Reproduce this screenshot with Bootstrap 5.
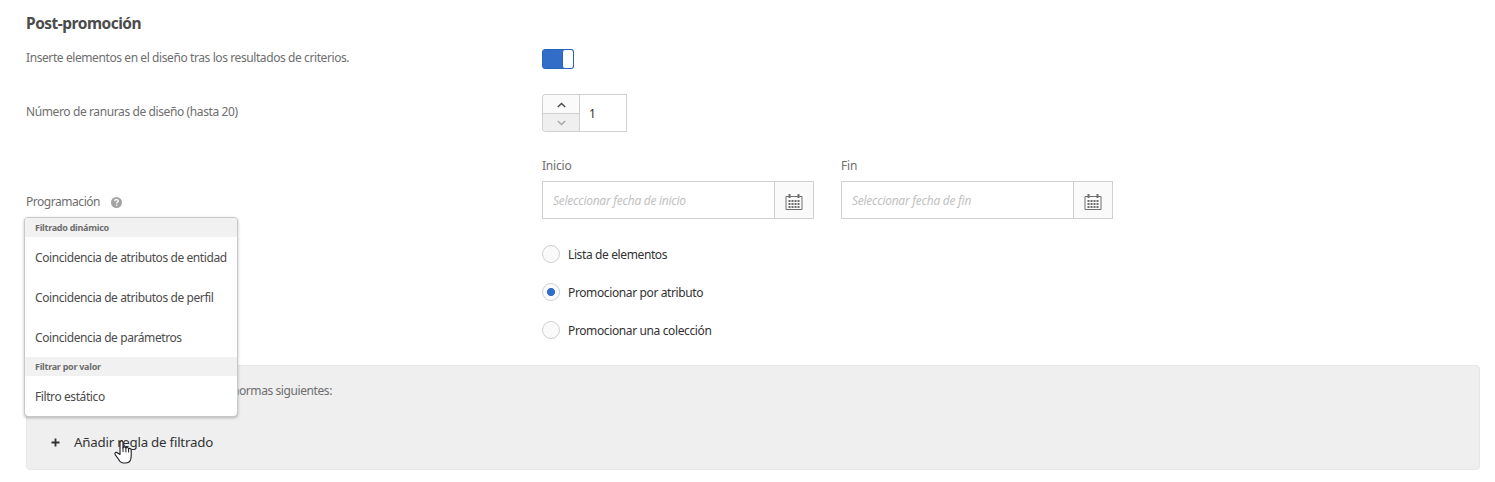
<!DOCTYPE html>
<html lang="es">
<head>
<meta charset="utf-8">
<meta name="viewport" content="width=device-width, initial-scale=1">
<title>Post-promoción</title>
<link href="https://cdn.jsdelivr.net/npm/bootstrap@5.3.0/dist/css/bootstrap.min.css" rel="stylesheet">
<style>
  body { font-family: "Noto Sans", "Open Sans", sans-serif; font-size: 12px; line-height: 18px; letter-spacing: -.41px; color: #6e6e6e; background: #fff; overflow: hidden; }
  .page { padding: 13px 15px 12px 26px; }
  .heading { font-size: 15.5px; line-height: 20px; letter-spacing: -.5px; font-weight: 700; color: #4b4b4b; margin: 0 0 16px; }
  .label-col { width: 516px; flex: none; }
  .toggle-row { height: 45px; }
  .slots-label { letter-spacing: -.39px; margin-top: -2px; }
  .schedule-label { gap: 11px; margin-bottom: 8px; letter-spacing: -.46px; }
  .toggle { width: 32px; height: 20px; border: 1px solid #2464bf; border-radius: 3px; background: #326ec8; }
  .toggle span { width: 12px; height: 20px; margin: -1px; border: 1px solid #2464bf; border-radius: 3px; background: #fff; }
  .stepper { height: 38px; width: 85px; }
  .stepper-buttons { width: 37px; flex: none; border: 1px solid #d0d0d0; border-right: 0; border-radius: 4px 0 0 4px; overflow: hidden; }
  .stepper-buttons button { border: 0; padding: 2px 0 0; height: 18px; background: #fafafa; color: #4b4b4b; }
  .stepper-buttons button + button { padding: 0; border-top: 1px solid #d0d0d0; background: #efefef; color: #a8a8a8; }
  .field { border: 1px solid #d0d0d0; border-radius: 0; padding: 2px 10px 0; font-size: 12px; color: #323232; letter-spacing: inherit; }
  .stepper .field { width: 48px; padding-left: 9px; }
  .date-group { width: 272px; height: 38px; }
  .date-group .field { border-right: 0; min-width: 0; }
  .date-label { margin-bottom: 6px; letter-spacing: -.2px; }
  .date-group .field::placeholder { color: #c2c2c2; font-style: italic; letter-spacing: -.27px; opacity: 1; }
  .date-group .btn { width: 40px; border: 1px solid #d0d0d0; border-radius: 0; background: #fafafa; color: #6e6e6e; padding: 3px 0 0; }
  .choices { margin-top: 26px; }
  .choice { height: 18px; gap: 8px; color: #323232; letter-spacing: -.38px; }
  .choice span { padding-top: 2px; }
  .choice .form-check-input { width: 18px; height: 18px; border: 1px solid #d0d0d0; background: #fafafa; box-shadow: none; }
  .choice .form-check-input:checked { background: radial-gradient(circle, #326ec8 3.7px, #fafafa 4.4px); }
  .rules { height: 105px; border: 1px solid #e6e6e6; border-radius: 4px; background: #efefef; margin-top: 26px; }
  .rules p { width: 305px; padding-top: 16px; }
  .add-rule { font-size: 13.3px; letter-spacing: -.22px; color: #323232; margin: 33px 0 0 24px; gap: 14px; }
  .add-rule svg { margin-top: 1px; }
  .filter-menu { left: 24px; top: 217px; width: 214px; height: 200px; padding: 0; border: 1px solid #c8c8c8; border-radius: 4px; box-shadow: 0 1px 3px rgba(0,0,0,.25); overflow: hidden; font-size: 12px; }
  .filter-menu .dropdown-header { height: 19px; padding: 0 10px; font-size: 9px; line-height: 19px; letter-spacing: -.27px; font-weight: 700; color: #6e6e6e; background: #f1f1f1; }
  .filter-menu .dropdown-item { height: 40px; padding: 1px 10px 0; line-height: 40px; color: #4b4b4b; }
  .pointer { left: 114px; top: 440px; z-index: 1001; }
</style>
</head>
<body>
<main class="page position-relative">
  <h1 class="heading">Post-promoción</h1>

  <div class="toggle-row d-flex">
    <div class="label-col">Inserte elementos en el diseño tras los resultados de criterios.</div>
    <div class="toggle d-flex justify-content-end" role="switch" aria-checked="true"><span></span></div>
  </div>

  <div class="d-flex align-items-center mb-4">
    <div class="label-col slots-label">Número de ranuras de diseño (hasta 20)</div>
    <div class="stepper d-flex">
      <div class="stepper-buttons d-flex flex-column">
        <button class="d-flex align-items-center justify-content-center" aria-label="Aumentar"><svg width="9" height="6" viewBox="0 0 9 6" fill="none" stroke="currentColor" stroke-width="1.5"><path d="M.8 5 4.5 1.5 8.2 5"/></svg></button>
        <button class="d-flex align-items-center justify-content-center flex-fill" aria-label="Reducir"><svg width="9" height="6" viewBox="0 0 9 6" fill="none" stroke="currentColor" stroke-width="1.5"><path d="M.8 1 4.5 4.5 8.2 1"/></svg></button>
      </div>
      <input class="field" value="1" aria-label="Número de ranuras">
    </div>
  </div>

  <div class="d-flex align-items-end">
    <div class="label-col schedule-label d-flex align-items-center"><span>Programación</span>
      <svg width="11" height="11" viewBox="0 0 10 10"><circle cx="5" cy="5" r="5" fill="#a3a3a3"/><path d="M3.400 3.800C3.400 1.800 6.600 1.800 6.600 3.700 6.600 4.800 5.100 4.800 5.100 6" fill="none" stroke="#fff" stroke-width="1.2"/><circle cx="5.100" cy="7.500" r=".75" fill="#fff"/></svg>
    </div>
    <div class="d-flex" style="gap:27px">
      <div>
        <label class="date-label d-block pt-0" for="start"><span class="d-block" style="padding-top:1px">Inicio</span></label>
        <div class="date-group d-flex">
          <input id="start" class="field flex-fill" placeholder="Seleccionar fecha de inicio">
          <button class="btn d-flex align-items-center justify-content-center" aria-label="Calendario"><svg width="18" height="16" viewBox="0 0 18 16"><path d="M1 2.500h16v13H1z" fill="none" stroke="currentColor"/><path d="M4.500 0v4M13.500 0v4" stroke="currentColor" stroke-width="2"/><path d="M3.500 7h11M3.500 10h11M3.500 13h11" stroke="currentColor" stroke-width="2" stroke-dasharray="2 1"/></svg></button>
        </div>
      </div>
      <div>
        <label class="date-label d-block pt-0" for="end"><span class="d-block" style="padding-top:1px">Fin</span></label>
        <div class="date-group d-flex">
          <input id="end" class="field flex-fill" placeholder="Seleccionar fecha de fin">
          <button class="btn d-flex align-items-center justify-content-center" aria-label="Calendario"><svg width="18" height="16" viewBox="0 0 18 16"><path d="M1 2.500h16v13H1z" fill="none" stroke="currentColor"/><path d="M4.500 0v4M13.500 0v4" stroke="currentColor" stroke-width="2"/><path d="M3.500 7h11M3.500 10h11M3.500 13h11" stroke="currentColor" stroke-width="2" stroke-dasharray="2 1"/></svg></button>
        </div>
      </div>
    </div>
  </div>

  <div class="choices d-flex">
    <div class="label-col"></div>
    <div class="d-flex flex-column" style="gap:20px">
      <label class="choice d-flex align-items-center"><input class="form-check-input m-0" type="radio" name="promo"><span>Lista de elementos</span></label>
      <label class="choice d-flex align-items-center"><input class="form-check-input m-0" type="radio" name="promo" checked><span>Promocionar por atributo</span></label>
      <label class="choice d-flex align-items-center"><input class="form-check-input m-0" type="radio" name="promo"><span>Promocionar una colección</span></label>
    </div>
  </div>

  <section class="rules">
    <p class="text-end mb-0">normas siguientes:</p>
    <div class="add-rule d-flex align-items-center">
      <svg width="9" height="9" viewBox="0 0 9 9"><path d="M4.500.5v8M.5 4.500h8" stroke="#323232" stroke-width="1.8"/></svg>
      <span>Añadir regla de filtrado</span>
    </div>
  </section>

  <div class="filter-menu dropdown-menu show">
    <h6 class="dropdown-header">Filtrado dinámico</h6>
    <a class="dropdown-item" href="#">Coincidencia de atributos de entidad</a>
    <a class="dropdown-item" href="#">Coincidencia de atributos de perfil</a>
    <a class="dropdown-item" href="#">Coincidencia de parámetros</a>
    <h6 class="dropdown-header">Filtrar por valor</h6>
    <a class="dropdown-item" href="#">Filtro estático</a>
  </div>

  <svg class="pointer position-absolute" width="18" height="24" viewBox="0 0 18 24"><path d="M6 14.500V2.600C6 .5 9 .5 9 2.600V8c.2-1.600 2.800-1.500 2.900.3.4-1.200 2.600-1 2.700.7.5-1 2.600-.6 2.600 1.100V16c0 3.500-1.500 7-5.500 7h-2c-2.500 0-4-1.600-5-3.500L1.200 14.600c-1-1.900 1.100-2.900 2.500-1.600z" fill="#fff" stroke="#1c1c24" stroke-width="1.1" stroke-linejoin="round"/><path d="M9 7.500v4.500M11.900 8.300v4M14.600 9v3.500" stroke="#1c1c24" stroke-width="1"/></svg>
</main>
<script src="https://cdn.jsdelivr.net/npm/bootstrap@5.3.0/dist/js/bootstrap.bundle.min.js"></script>
</body>
</html>
